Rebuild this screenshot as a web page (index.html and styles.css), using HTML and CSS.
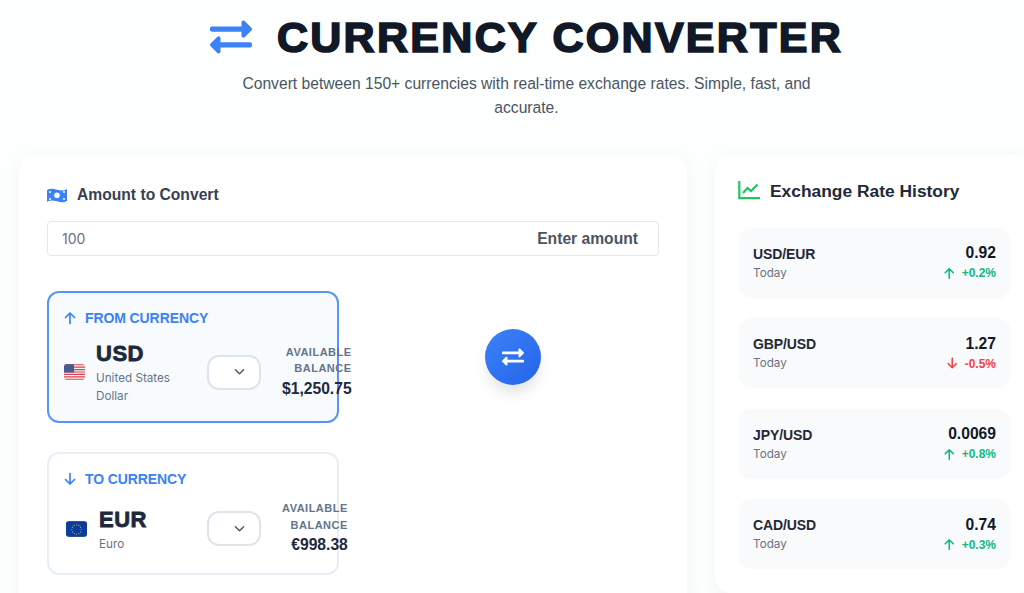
FILE: index.html
```html
<!DOCTYPE html>
<html lang="en">
<head>
  <meta charset="UTF-8">
  <meta name="viewport" content="width=device-width, initial-scale=1.0">
  <title>Currency Converter</title>
  <link rel="stylesheet" href="styles.css">
</head>
<body>
  <div class="page">
    <header class="header">
      <div class="title-row">
        <svg class="title-icon" viewBox="0 0 512 512"><path fill="#3b82f6" d="M0 168v-16c0-13.255 10.745-24 24-24h360V80c0-21.367 25.899-32.042 40.971-16.971l80 80c9.372 9.373 9.372 24.569 0 33.941l-80 80C409.956 271.982 384 261.456 384 240v-48H24c-13.255 0-24-10.745-24-24zm488 152H128v-48c0-21.314-25.862-32.08-40.971-16.971l-80 80c-9.372 9.373-9.372 24.569 0 33.941l80 80C102.057 463.997 128 453.437 128 432v-48h360c13.255 0 24-10.745 24-24v-16c0-13.255-10.745-24-24-24z"/></svg>
        <h1>CURRENCY CONVERTER</h1>
      </div>
      <p class="subtitle">Convert between 150+ currencies with real-time exchange rates. Simple, fast, and accurate.</p>
    </header>

    <main class="layout">
      <section class="card converter">
        <div class="amount-label">
          <svg class="bill-icon" viewBox="0 0 20 16"><path fill="#3b82f6" d="M0 3c3-1.6 6-1.4 10-.3s7 1.2 10-.7v12c-3 1.6-6 1.4-10 .3S3 13.100 0 14.800z"/><circle cx="10" cy="8.300" r="2.800" fill="#fff"/><circle cx="3" cy="5" r="1" fill="#fff"/><circle cx="17" cy="5" r="1" fill="#fff"/><circle cx="3" cy="12" r="1" fill="#fff"/><circle cx="17" cy="12" r="1" fill="#fff"/></svg>
          <span>Amount to Convert</span>
        </div>
        <label class="amount-box">
          <input class="amount-input" type="text" value="100">
          <span class="amount-hint">Enter amount</span>
        </label>

        <div class="currency-grid">
          <div class="currency-card active">
            <div class="currency-label">
              <svg class="arrow-icon" viewBox="0 0 14 14"><path d="M7 12.500V2M2.500 6.500 7 2l4.500 4.500"/></svg>
              <span>FROM CURRENCY</span>
            </div>
            <div class="currency-row">
              <div class="currency-main">
                <svg class="flag" viewBox="0 0 20 15">
                  <rect width="20" height="15" fill="#f3f4f6"/>
                  <path stroke="#d9434e" stroke-width="1.150" d="M0 .6h20M0 2.900h20M0 5.200h20M0 7.500h20M0 9.800h20M0 12.100h20M0 14.400h20"/>
                  <rect width="9.500" height="8" fill="#4a5a94"/>
                </svg>
                <div class="currency-info">
                  <div class="currency-code">USD</div>
                  <div class="currency-name">United States Dollar</div>
                </div>
              </div>
              <button class="currency-select" type="button"><svg viewBox="0 0 12 8"><path d="M1.500 1.500 6 6l4.500-4.500"/></svg></button>
              <div class="balance">
                <div class="balance-label">AVAILABLE BALANCE</div>
                <div class="balance-value">$1,250.75</div>
              </div>
            </div>
          </div>

          <div class="swap-cell">
            <button class="swap-btn" type="button">
              <svg viewBox="0 0 512 512"><path fill="#fff" d="M0 168v-16c0-13.255 10.745-24 24-24h360V80c0-21.367 25.899-32.042 40.971-16.971l80 80c9.372 9.373 9.372 24.569 0 33.941l-80 80C409.956 271.982 384 261.456 384 240v-48H24c-13.255 0-24-10.745-24-24zm488 152H128v-48c0-21.314-25.862-32.08-40.971-16.971l-80 80c-9.372 9.373-9.372 24.569 0 33.941l80 80C102.057 463.997 128 453.437 128 432v-48h360c13.255 0 24-10.745 24-24v-16c0-13.255-10.745-24-24-24z"/></svg>
            </button>
          </div>

          <div class="currency-card">
            <div class="currency-label">
              <svg class="arrow-icon" viewBox="0 0 14 14"><path d="M7 1.500V12M2.500 7.500 7 12l4.500-4.500"/></svg>
              <span>TO CURRENCY</span>
            </div>
            <div class="currency-row">
              <div class="currency-main shifted">
                <svg class="flag" viewBox="0 0 20 15">
                  <rect width="20" height="15" fill="#0b3d9c"/>
                  <g fill="#c9b23a">
                    <circle cx="10" cy="3.500" r=".55"/><circle cx="12.250" cy="4.100" r=".55"/><circle cx="13.900" cy="5.750" r=".55"/><circle cx="14.500" cy="8" r=".55"/><circle cx="13.900" cy="10.250" r=".55"/><circle cx="12.250" cy="11.900" r=".55"/><circle cx="10" cy="12.500" r=".55"/><circle cx="7.750" cy="11.900" r=".55"/><circle cx="6.100" cy="10.250" r=".55"/><circle cx="5.500" cy="8" r=".55"/><circle cx="6.100" cy="5.750" r=".55"/><circle cx="7.750" cy="4.100" r=".55"/>
                  </g>
                </svg>
                <div class="currency-info">
                  <div class="currency-code">EUR</div>
                  <div class="currency-name">Euro</div>
                </div>
              </div>
              <button class="currency-select" type="button"><svg viewBox="0 0 12 8"><path d="M1.500 1.500 6 6l4.500-4.500"/></svg></button>
              <div class="balance">
                <div class="balance-label">AVAILABLE BALANCE</div>
                <div class="balance-value">€998.38</div>
              </div>
            </div>
          </div>
        </div>
      </section>

      <aside class="card history">
        <div class="history-title">
          <svg class="chart-icon" viewBox="0 0 22 19"><path class="chart-axis" d="M1.300 0v17.200H22"/><path class="chart-line" d="M5 12l4.500-5 3.500 3 6.500-6.500"/></svg>
          <h2>Exchange Rate History</h2>
        </div>
        <div class="rate-list">
          <div class="rate-item">
            <div><div class="rate-pair">USD/EUR</div><div class="rate-date">Today</div></div>
            <div class="rate-right">
              <div class="rate-value">0.92</div>
              <div class="rate-change up"><svg viewBox="0 0 14 14"><path d="M7 12.500V2M2.500 6.500 7 2l4.500 4.500"/></svg>+0.2%</div>
            </div>
          </div>
          <div class="rate-item">
            <div><div class="rate-pair">GBP/USD</div><div class="rate-date">Today</div></div>
            <div class="rate-right">
              <div class="rate-value">1.27</div>
              <div class="rate-change down"><svg viewBox="0 0 14 14"><path d="M7 1.500V12M2.500 7.500 7 12l4.500-4.500"/></svg>-0.5%</div>
            </div>
          </div>
          <div class="rate-item">
            <div><div class="rate-pair">JPY/USD</div><div class="rate-date">Today</div></div>
            <div class="rate-right">
              <div class="rate-value">0.0069</div>
              <div class="rate-change up"><svg viewBox="0 0 14 14"><path d="M7 12.500V2M2.500 6.500 7 2l4.500 4.500"/></svg>+0.8%</div>
            </div>
          </div>
          <div class="rate-item">
            <div><div class="rate-pair">CAD/USD</div><div class="rate-date">Today</div></div>
            <div class="rate-right">
              <div class="rate-value">0.74</div>
              <div class="rate-change up"><svg viewBox="0 0 14 14"><path d="M7 12.500V2M2.500 6.500 7 2l4.500 4.500"/></svg>+0.3%</div>
            </div>
          </div>
        </div>
      </aside>
    </main>
  </div>
</body>
</html>
```

FILE: styles.css
```css
html, body {
  margin: 0;
  height: 593px;
  overflow: hidden;
}
body {
  font-family: "Liberation Sans", sans-serif;
  background: #fdfefe;
  color: #111827;
}
.page {
  width: 1015px;
  margin-left: 19px;
}

/* header */
.header {
  padding-top: 12px;
  text-align: center;
}
.title-row {
  display: flex;
  justify-content: center;
  align-items: center;
  gap: 25px;
  height: 50px;
}
.title-icon {
  width: 42px;
  height: 42px;
}
h1 {
  margin: 0;
  font-size: 43px;
  font-weight: 700;
  letter-spacing: 2.300px;
  line-height: 50px;
  color: #111827;
  -webkit-text-stroke: 1.700px #111827;
}
.subtitle {
  width: 600px;
  margin: 10px auto 0;
  font-size: 15.650px;
  line-height: 24px;
  color: #4b5563;
}

/* main layout */
.layout {
  display: grid;
  grid-template-columns: 668px 319px;
  gap: 28px;
  margin-top: 35px;
}
.card {
  background: #fff;
  border-radius: 16px;
  box-shadow: 0 4px 20px rgba(30, 41, 59, 0.05);
  padding: 24px;
}
.converter {
  padding: 28px;
  height: 520px;
  box-sizing: border-box;
}

/* amount */
.amount-label {
  display: flex;
  align-items: center;
  gap: 10px;
  height: 24px;
  font-size: 15.650px;
  font-weight: 700;
  color: #374151;
}
.bill-icon {
  width: 20px;
  height: 16px;
}
.amount-box {
  display: flex;
  align-items: center;
  height: 35px;
  margin-top: 14px;
  padding: 0 20px 0 14px;
  box-sizing: border-box;
  border: 1px solid #e5e7eb;
  border-radius: 4px;
  background: #fff;
}
.amount-input {
  flex: 1;
  min-width: 0;
  border: none;
  outline: none;
  padding: 0;
  background: none;
  font-family: Inter, sans-serif;
  font-size: 14px;
  color: #6b7280;
}
.amount-hint {
  font-size: 15.650px;
  font-weight: 700;
  color: #4b5563;
}

/* currency cards */
.currency-grid {
  display: grid;
  grid-template-columns: 292px 292px;
  column-gap: 28px;
  row-gap: 29px;
  margin-top: 35px;
}
.currency-card {
  box-sizing: border-box;
  padding: 15px 14px 16px;
  border: 2px solid #e8eef5;
  border-radius: 12px;
}
.currency-card.active {
  border-color: #5595f8;
  background: #f8fbfe;
}
.currency-label {
  display: flex;
  align-items: center;
  gap: 8px;
  height: 20px;
  font-size: 14px;
  font-weight: 700;
  letter-spacing: -0.1px;
  color: #3b82f6;
}
.arrow-icon {
  width: 14px;
  height: 14px;
  flex: none;
  fill: none;
  stroke: #3b82f6;
  stroke-width: 1.700;
  stroke-linecap: round;
  stroke-linejoin: round;
}
.currency-row {
  display: flex;
  align-items: center;
  margin-top: 11px;
}
.currency-main {
  display: flex;
  align-items: center;
  gap: 11px;
  flex: none;
  width: 144px;
  padding-left: 1px;
  box-sizing: border-box;
}
.currency-main.shifted {
  padding-left: 3px;
  gap: 12px;
}
.flag {
  flex: none;
  width: 21px;
  height: 16px;
  border-radius: 3px;
}
.currency-info {
  width: 80px;
}
.currency-code {
  font-size: 22px;
  font-weight: 700;
  line-height: 30px;
  letter-spacing: 0.5px;
  color: #1e293b;
  -webkit-text-stroke: 0.8px #1e293b;
}
.currency-name {
  font-family: Inter, sans-serif;
  font-size: 11.700px;
  line-height: 18px;
  color: #64748b;
}
.currency-select {
  flex: none;
  display: flex;
  align-items: center;
  justify-content: center;
  box-sizing: border-box;
  width: 54px;
  height: 35px;
  padding: 0 0 0 10px;
  background: #fff;
  border: 2px solid #dfe4ea;
  border-radius: 12px;
}
.currency-select svg {
  width: 11px;
  height: 8px;
  fill: none;
  stroke: #4b5563;
  stroke-width: 1.500;
  stroke-linecap: round;
  stroke-linejoin: round;
}
.balance {
  flex: none;
  margin-left: 21px;
  text-align: right;
}
.balance-label {
  width: min-content;
  margin-left: auto;
  font-size: 11px;
  font-weight: 700;
  line-height: 16.500px;
  letter-spacing: 0.5px;
  color: #64748b;
}
.balance-value {
  font-size: 15.650px;
  font-weight: 700;
  line-height: 24px;
  color: #1e293b;
  white-space: nowrap;
}

/* swap */
.swap-cell {
  display: flex;
  align-items: center;
  justify-content: center;
}
.swap-btn {
  display: flex;
  align-items: center;
  justify-content: center;
  width: 56px;
  height: 56px;
  padding: 0;
  border: none;
  border-radius: 50%;
  background: linear-gradient(135deg, #3b82f6, #2563eb);
  box-shadow: 0 10px 15px -3px rgba(0, 0, 0, 0.12);
}
.swap-btn svg {
  width: 22px;
  height: 22px;
}

/* history */
.history {
  height: 438px;
  box-sizing: border-box;
}
.history-title {
  display: flex;
  align-items: center;
  gap: 10px;
  height: 24px;
}
.chart-icon {
  width: 22px;
  height: 19px;
  margin: 0 0 2px -1px;
  fill: none;
  stroke: #22c55e;
  stroke-width: 2.200;
}
h2 {
  margin: 0;
  font-size: 17.400px;
  font-weight: 700;
  color: #1f2937;
}
.rate-list {
  display: flex;
  flex-direction: column;
  gap: 20.500px;
  margin-top: 24.500px;
}
.rate-item {
  display: flex;
  justify-content: space-between;
  align-items: center;
  height: 70px;
  box-sizing: border-box;
  padding: 0 14px;
  background: #f8fafc;
  border-radius: 12px;
}
.rate-pair {
  font-size: 14px;
  font-weight: 700;
  letter-spacing: -0.1px;
  line-height: 20px;
  color: #1f2937;
}
.rate-date {
  font-family: Inter, sans-serif;
  font-size: 11.700px;
  line-height: 18px;
  color: #6b7280;
}
.rate-right {
  text-align: right;
}
.rate-value {
  font-size: 15.650px;
  font-weight: 700;
  line-height: 21px;
  color: #111827;
}
.rate-change {
  display: flex;
  justify-content: flex-end;
  align-items: center;
  gap: 6px;
  font-size: 12px;
  font-weight: 700;
  line-height: 20px;
}
.rate-change svg {
  width: 12.500px;
  height: 12.500px;
  fill: none;
  stroke: currentColor;
  stroke-width: 1.800;
  stroke-linecap: round;
  stroke-linejoin: round;
}
.rate-change.up {
  color: #10b981;
}
.rate-change.down {
  color: #ef4444;
}
```
